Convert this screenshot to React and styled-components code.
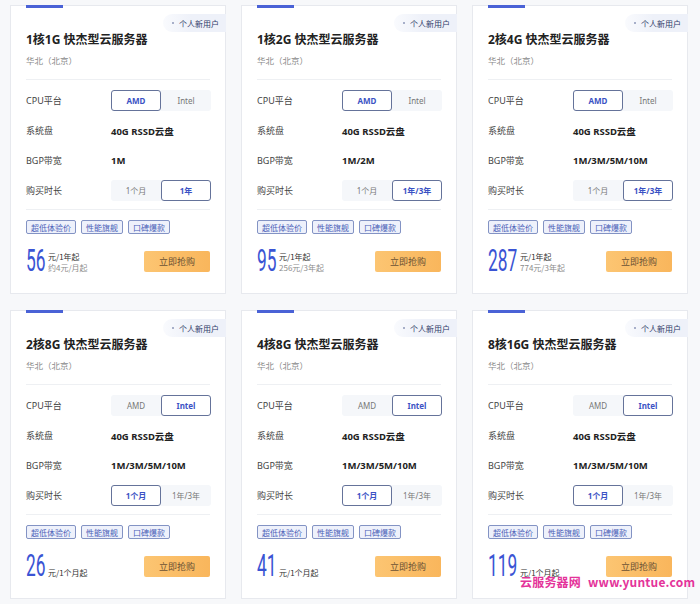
import styled, { createGlobalStyle } from "styled-components";

const GlobalStyle = createGlobalStyle`
  html, body {
    margin: 0;
    padding: 0;
    background: #f7f8fa;
  }
  body {
    font-family: "Noto Sans", "Noto Sans CJK SC", sans-serif;
    color: #333;
  }
`;

const Page = styled.div`
  position: relative;
  width: 700px;
  height: 604px;
  box-sizing: border-box;
  padding: 5px 10px 0;
  display: grid;
  grid-template-columns: repeat(3, 216px);
  grid-auto-rows: 289px;
  column-gap: 15px;
  row-gap: 16px;
`;

const Card = styled.div`
  position: relative;
  background: #fff;
  border: 1px solid #e7e9ee;
  box-sizing: border-box;
  padding: 0 15px;
  display: flex;
  flex-direction: column;
`;

const Accent = styled.div`
  width: 37px;
  height: 3px;
  background: #4a62d6;
  margin-top: -1px;
`;

const Badge = styled.div`
  position: absolute;
  top: 8px;
  right: -1px;
  height: 18px;
  display: flex;
  align-items: center;
  gap: 5px;
  padding: 0 7px 0 9px;
  border-radius: 9px 0 0 9px;
  background: linear-gradient(to right, rgba(236, 240, 250, 0.3), #eef1f9 45%);
  font-family: "Noto Sans CJK SC", sans-serif;
  font-size: 8px;
  color: #2f3b68;

  &::before {
    content: "";
    width: 2px;
    height: 2px;
    border-radius: 50%;
    background: #8d97b8;
  }
`;

const Title = styled.div`
  margin-top: 23px;
  font-family: "Noto Sans", "Noto Sans CJK SC", sans-serif;
  font-size: 12px;
  font-weight: 700;
  line-height: 18px;
  color: #222;
`;

const Region = styled.div`
  margin-top: 4px;
  font-family: "Noto Sans CJK SC", sans-serif;
  font-size: 8.5px;
  line-height: 14px;
  color: #8a8a8a;
`;

const Divider = styled.div`
  height: 1px;
  background: #eef0f3;
  margin-top: ${({ $top }) => $top}px;
`;

const Specs = styled.div`
  margin-top: 10px;
  display: flex;
  flex-direction: column;
  gap: 9px;
`;

const Row = styled.div`
  display: grid;
  grid-template-columns: 85px 100px;
  align-items: center;
  height: 21px;
`;

const Label = styled.div`
  font-family: "Noto Sans", "Noto Sans CJK SC", sans-serif;
  font-size: 9px;
  color: #444;
`;

const Value = styled.div`
  font-family: "Noto Sans", "Noto Sans CJK SC", sans-serif;
  font-size: 9.5px;
  font-weight: 700;
  color: #222;
`;

const Toggle = styled.div`
  display: flex;
  height: 21px;
  background: #f5f7fa;
  border-radius: 3px;
`;

const Option = styled.div`
  flex: 1;
  display: flex;
  align-items: center;
  justify-content: center;
  box-sizing: border-box;
  border-radius: 3px;
  font-family: "Noto Sans", "Noto Sans CJK SC", sans-serif;
  font-size: 8px;
  border: 1px solid ${({ $on }) => ($on ? "#65739a" : "transparent")};
  background: ${({ $on }) => ($on ? "#fff" : "transparent")};
  color: ${({ $on }) => ($on ? "#3b52c4" : "#777")};
  font-weight: ${({ $on }) => ($on ? 700 : 400)};
`;

const Tags = styled.div`
  margin-top: 10px;
  display: flex;
  gap: 5px;
`;

const Tag = styled.div`
  height: 14px;
  box-sizing: border-box;
  padding: 0 4px;
  display: flex;
  align-items: center;
  border: 1px solid #8393c4;
  border-radius: 2px;
  background: #eef1fb;
  font-family: "Noto Sans CJK SC", sans-serif;
  font-size: 8px;
  color: #4b5fb8;
`;

const PriceRow = styled.div`
  margin-top: 16px;
  height: 22px;
  display: flex;
  align-items: center;
  justify-content: space-between;
`;

const Price = styled.div`
  display: flex;
  align-items: flex-end;
  gap: 2px;
  height: 22px;
`;

const Amount = styled.div`
  width: ${({ $digits }) => $digits * 10}px;
  height: 22px;
  overflow: visible;

  span {
    display: inline-block;
    font-family: Roboto, "Noto Sans", sans-serif;
    font-size: 31px;
    line-height: 22px;
    color: #3a54d4;
    transform: scaleX(0.56);
    transform-origin: left center;
    white-space: nowrap;
  }
`;

const PriceNotes = styled.div`
  display: flex;
  flex-direction: column;
  font-family: "Noto Sans CJK SC", sans-serif;
  font-size: 8px;
  line-height: 11px;
  color: #333;
  margin-bottom: -1px;
`;

const Sub = styled.span`
  color: #8c8c8c;
`;

const BuyButton = styled.button`
  width: 66px;
  height: 21px;
  border: none;
  border-radius: 2px;
  background: linear-gradient(to right, #fcc572, #f9b65c);
  font-family: "Noto Sans CJK SC", sans-serif;
  font-size: 9px;
  color: #6b5234;
  padding: 0;
  cursor: pointer;
`;

const Watermark = styled.div`
  position: absolute;
  left: 520px;
  top: 575px;
  display: flex;
  gap: 7px;
  font-family: "Noto Sans CJK SC", sans-serif;
  font-size: 12px;
  font-weight: 700;
  line-height: 14px;
  color: #e4339a;
  letter-spacing: 0.2px;
  white-space: nowrap;
`;

const plans = [
  { name: "1核1G", cpu: 0, bw: "1M", terms: ["1个月", "1年"], term: 1, price: "56", note: "元/1年起", sub: "约4元/月起" },
  { name: "1核2G", cpu: 0, bw: "1M/2M", terms: ["1个月", "1年/3年"], term: 1, price: "95", note: "元/1年起", sub: "256元/3年起" },
  { name: "2核4G", cpu: 0, bw: "1M/3M/5M/10M", terms: ["1个月", "1年/3年"], term: 1, price: "287", note: "元/1年起", sub: "774元/3年起" },
  { name: "2核8G", cpu: 1, bw: "1M/3M/5M/10M", terms: ["1个月", "1年/3年"], term: 0, price: "26", note: "元/1个月起" },
  { name: "4核8G", cpu: 1, bw: "1M/3M/5M/10M", terms: ["1个月", "1年/3年"], term: 0, price: "41", note: "元/1个月起" },
  { name: "8核16G", cpu: 1, bw: "1M/3M/5M/10M", terms: ["1个月", "1年/3年"], term: 0, price: "119", note: "元/1个月起" },
];

function PlanCard({ plan }) {
  return (
    <Card>
      <Accent />
      <Badge>个人新用户</Badge>
      <Title>{plan.name} 快杰型云服务器</Title>
      <Region>华北（北京）</Region>
      <Divider $top={12} />
      <Specs>
        <Row>
          <Label>CPU平台</Label>
          <Toggle>
            {["AMD", "Intel"].map((c, i) => (
              <Option key={c} $on={plan.cpu === i}>{c}</Option>
            ))}
          </Toggle>
        </Row>
        <Row>
          <Label>系统盘</Label>
          <Value>40G RSSD云盘</Value>
        </Row>
        <Row>
          <Label>BGP带宽</Label>
          <Value>{plan.bw}</Value>
        </Row>
        <Row>
          <Label>购买时长</Label>
          <Toggle>
            {plan.terms.map((t, i) => (
              <Option key={t} $on={plan.term === i}>{t}</Option>
            ))}
          </Toggle>
        </Row>
      </Specs>
      <Divider $top={8} />
      <Tags>
        <Tag>超低体验价</Tag>
        <Tag>性能旗舰</Tag>
        <Tag>口碑爆款</Tag>
      </Tags>
      <PriceRow>
        <Price>
          <Amount $digits={plan.price.length}>
            <span>{plan.price}</span>
          </Amount>
          <PriceNotes>
            <span>{plan.note}</span>
            {plan.sub && <Sub>{plan.sub}</Sub>}
          </PriceNotes>
        </Price>
        <BuyButton>立即抢购</BuyButton>
      </PriceRow>
    </Card>
  );
}

export default function App() {
  return (
    <>
      <GlobalStyle />
      <Page>
        {plans.map((p) => (
          <PlanCard key={p.name} plan={p} />
        ))}
        <Watermark>
          <span>云服务器网</span>
          <span>www.yuntue.com</span>
        </Watermark>
      </Page>
    </>
  );
}
